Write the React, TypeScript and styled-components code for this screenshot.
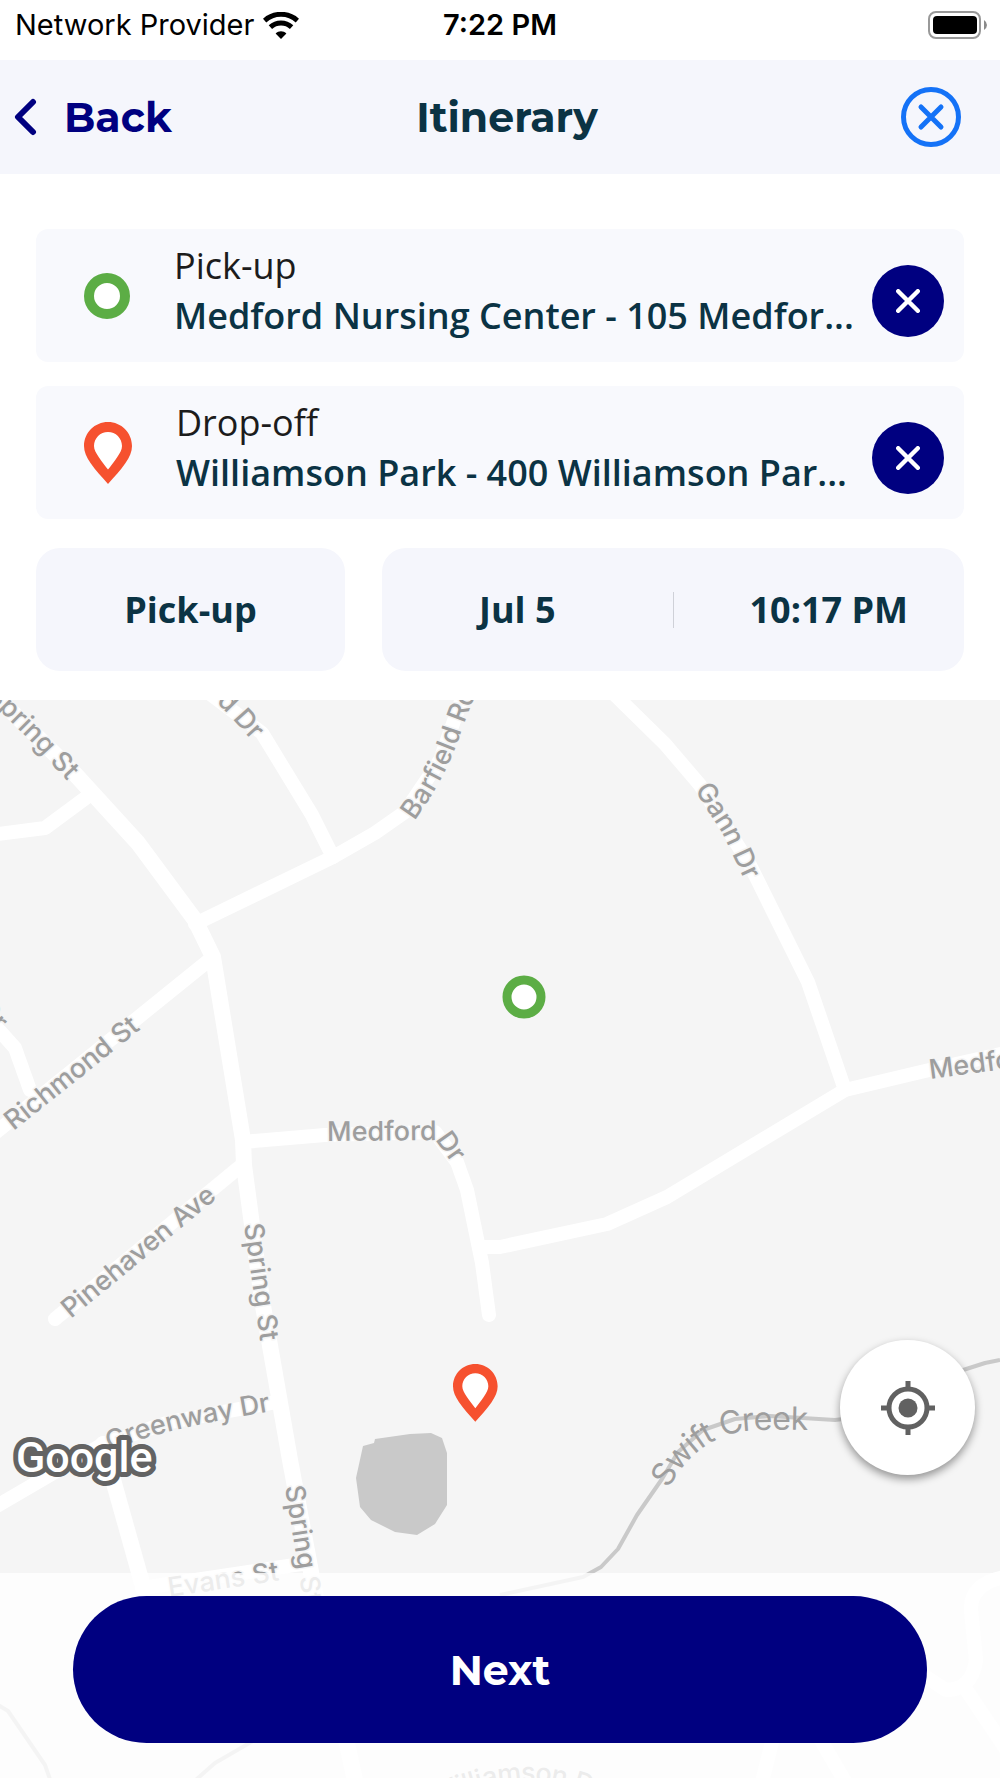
import React from "react";
import styled, { createGlobalStyle } from "styled-components";

const color = {
  navy: "#000080",
  ink: "#0b3344",
  text: "#1c1c1c",
  bar: "#f5f6fc",
  card: "#f8f9fd",
  link: "#1472f7",
  green: "#5cad45",
  red: "#f6512f",
  land: "#f5f5f5",
  water: "#c9c9c9",
  label: "#9e9e9e",
};

const GlobalStyle = createGlobalStyle`
  *, *::before, *::after { box-sizing: border-box; }
  html, body { margin: 0; background: #fff; }
  button { margin: 0; padding: 0; border: 0; background: none; font: inherit; color: inherit; cursor: pointer; }
  svg { display: block; }
`;

const Screen = styled.div`
  display: flex;
  flex-direction: column;
  min-height: 100vh;
  font-family: "Open Sans", "Noto Sans", sans-serif;
  font-size: 36px;
  line-height: 50px;
  color: ${color.text};
`;

const StatusBar = styled.div`
  display: grid;
  grid-template-columns: 1fr auto 1fr;
  align-items: center;
  height: 60px;
  padding: 0 12px 10px;
  font-family: Inter, sans-serif;
  font-size: 29px;
  line-height: 36px;
  color: #000;
`;

const Carrier = styled.div`
  display: flex;
  align-items: center;
  gap: 9px;
  padding-left: 3px;
`;

const Clock = styled.time`
  font-weight: 600;
`;

const BatterySlot = styled.div`
  justify-self: end;
`;

const Header = styled.header`
  display: grid;
  grid-template-columns: 1fr auto 1fr;
  align-items: center;
  height: 114px;
  padding-left: 14px;
  background: ${color.bar};
  font-family: Montserrat, Inter, sans-serif;
  font-size: 41px;
  line-height: 50px;
  font-weight: 700;
`;

const BackButton = styled.button`
  display: flex;
  align-items: center;
  justify-self: start;
  gap: 26px;
  color: ${color.navy};
`;

const Title = styled.h1`
  margin: 0;
  font-size: inherit;
  font-weight: inherit;
  color: ${color.ink};
`;

const CloseButton = styled.button`
  justify-self: end;
  margin-right: 39px;
  color: ${color.link};
`;

const Trip = styled.main`
  display: flex;
  flex-direction: column;
  gap: 24px;
  padding: 55px 36px 29px;
`;

const StopCard = styled.section`
  display: flex;
  align-items: center;
  height: 133px;
  padding: 0 20px 0 48px;
  border-radius: 12px;
  background: ${color.card};
`;

const StopText = styled.div`
  flex: 1;
  min-width: 0;
  height: 100%;
  padding-top: 12px;
  margin: 0 12px 0 44px;
  white-space: nowrap;
`;

const StopKind = styled.div``;

const StopAddress = styled.div`
  font-weight: 600;
  color: ${color.ink};
`;

const ClearButton = styled.button`
  display: grid;
  place-items: center;
  align-self: flex-end;
  width: 72px;
  height: 72px;
  margin-bottom: 25px;
  border-radius: 50%;
  background: ${color.navy};
  color: #fff;
`;

const Schedule = styled.div`
  display: grid;
  grid-template-columns: 309fr 582fr;
  gap: 37px;
  margin-top: 5px;
  font-weight: 700;
  color: ${color.ink};
`;

const ModeButton = styled.button`
  height: 123px;
  border-radius: 24px;
  background: ${color.bar};
`;

const DateTime = styled.div`
  display: flex;
  align-items: center;
  height: 123px;
  border-radius: 24px;
  background: ${color.bar};
`;

const DateTimeButton = styled.button`
  flex: 1 1 0;
  height: 100%;
`;

const Divider = styled.span`
  width: 1px;
  height: 36px;
  margin: 0 20px;
  background: #cfd1d8;
`;

const MapArea = styled.section`
  position: relative;
  display: flex;
  flex-direction: column;
  justify-content: flex-end;
  flex: 1;
  min-height: 900px;
  overflow: hidden;
  background: ${color.land};
`;

const MapCanvas = styled.svg`
  position: absolute;
  inset: 0;
  width: 100%;
  height: 100%;
`;

const Road = styled.path<{ $width?: number }>`
  fill: none;
  stroke: #fff;
  stroke-width: ${(p) => p.$width ?? 14};
  stroke-linejoin: round;
  stroke-linecap: round;
`;

const Creek = styled.path`
  fill: none;
  stroke: ${color.water};
  stroke-width: 4;
  stroke-linejoin: round;
`;

const StreetLabel = styled.text<{ $water?: boolean }>`
  font-family: Inter, Roboto, sans-serif;
  font-size: ${(p) => (p.$water ? 32 : 27)}px;
  font-weight: ${(p) => (p.$water ? 400 : 500)};
  fill: ${color.label};
  stroke: ${(p) => (p.$water ? "none" : color.land)};
  stroke-width: 3px;
  stroke-linejoin: round;
  paint-order: stroke;
`;

const MapBrand = styled.text`
  font-family: Roboto, sans-serif;
  font-size: 43px;
  font-weight: 500;
  fill: #fff;
  stroke: #636363;
  stroke-width: 10px;
  stroke-linejoin: round;
  paint-order: stroke;
`;

const LocateButton = styled.button`
  position: relative;
  display: grid;
  place-items: center;
  align-self: flex-end;
  width: 135px;
  height: 135px;
  margin: 0 25px 98px 0;
  border-radius: 50%;
  background: #fff;
  color: #616161;
  box-shadow: 0 4px 8px rgba(0, 0, 0, 0.4);
`;

const Footer = styled.footer`
  position: relative;
  display: flex;
  padding: 23px 73px 35px;
  background: rgba(255, 255, 255, 0.8);
`;

const NextButton = styled.button`
  flex: 1;
  height: 147px;
  border-radius: 74px;
  background: ${color.navy};
  color: #fff;
  font-family: Montserrat, Inter, sans-serif;
  font-size: 41px;
  font-weight: 700;
`;

const WifiIcon = () => (
  <svg width="36" height="27" viewBox="0 0 36 27" fill="none" stroke="#000" aria-hidden="true">
    <path d="M1.6 8.600C10.700 .2 25.300 .2 34.400 8.600" strokeWidth="5" />
    <path d="M7.400 15.200C13.400 9.700 22.600 9.700 28.600 15.200" strokeWidth="5" />
    <path d="M18 27L12.600 21.500C15.600 18.500 20.400 18.500 23.400 21.500Z" fill="#000" stroke="none" />
  </svg>
);

const BatteryIcon = () => (
  <svg width="60" height="28" viewBox="0 0 60 28" aria-label="Battery full" role="img">
    <rect x="1" y="1" width="51" height="26" rx="7" fill="none" stroke="#999" strokeWidth="2" />
    <rect x="5" y="5" width="44" height="18" rx="4" fill="#000" />
    <path d="M56 9q3 2 3 5t-3 5z" fill="#8a8a8a" />
  </svg>
);

const ChevronIcon = () => (
  <svg width="24" height="38" viewBox="0 0 24 38" fill="none" aria-hidden="true">
    <path d="M19 4L4 19L19 34" stroke="currentColor" strokeWidth="6" strokeLinecap="round" strokeLinejoin="round" />
  </svg>
);

const CloseIcon = () => (
  <svg width="60" height="60" viewBox="0 0 60 60" fill="none" stroke="currentColor" strokeWidth="5" aria-hidden="true">
    <circle cx="30" cy="30" r="27.500" />
    <path d="M20 20L40 40M40 20L20 40" strokeLinecap="round" />
  </svg>
);

const CrossIcon = () => (
  <svg width="24" height="24" viewBox="0 0 24 24" fill="none" aria-hidden="true">
    <path d="M2.200 2.200L21.800 21.800M21.800 2.200L2.200 21.800" stroke="currentColor" strokeWidth="4.400" strokeLinecap="round" />
  </svg>
);

const RingIcon = () => (
  <svg width="46" height="46" viewBox="0 0 46 46" aria-hidden="true">
    <circle cx="23" cy="23" r="18" fill="#fff" stroke={color.green} strokeWidth="10" />
  </svg>
);

const PinShape = () => (
  <>
    <path
      d="M24 0C10.700 0 0 10.700 0 24C0 30 2.500 35 6.500 41C11.500 48.500 18 55 24 62C30 55 36.500 48.500 41.500 41C45.500 35 48 30 48 24C48 10.700 37.300 0 24 0Z"
      fill={color.red}
    />
    <path
      d="M24 10C16.200 10 10 16.200 10 24C10 27.500 12 31 15 35.500C18 40 21 43.700 24 47.500C27 43.700 30 40 33 35.500C36 31 38 27.500 38 24C38 16.200 31.800 10 24 10Z"
      fill="#fff"
    />
  </>
);

const PinIcon = () => (
  <svg width="48" height="62" viewBox="0 0 48 62" aria-hidden="true">
    <PinShape />
  </svg>
);

const LocateIcon = () => (
  <svg width="54" height="54" viewBox="0 0 54 54" fill="none" stroke="currentColor" strokeWidth="5" aria-hidden="true">
    <circle cx="27" cy="27" r="19" />
    <circle cx="27" cy="27" r="9.500" fill="currentColor" stroke="none" />
    <path d="M27 0V7M27 47V54M0 27H7M47 27H54" />
  </svg>
);

type Street = { id: string; name: string; line: string; end?: boolean; water?: boolean };

const streets: Street[] = [
  { id: "spring-n", name: "Spring St", line: "M-45 653L3 701L40 738L74 775", end: true },
  { id: "dr-n", name: "d Dr", line: "M188 660L230 703L259 735", end: true },
  { id: "barfield", name: "Barfield Rd", line: "M407 816Q440 770 452 730L475 670" },
  { id: "gann", name: "Gann Dr", line: "M702 785L731 830L769 912" },
  { id: "medford-e", name: "Medford Dr", line: "M929 1070L1080 1050" },
  { id: "medford", name: "Medford Dr", line: "M327 1132L440 1131L484 1193" },
  { id: "richmond", name: "Richmond St", line: "M8 1124L159 1003" },
  { id: "pinehaven", name: "Pinehaven Ave", line: "M65 1312L240 1168" },
  { id: "spring-m", name: "Spring St", line: "M253 1223L272 1360" },
  { id: "greenway", name: "Greenway Dr", line: "M107 1443Q147 1422 290 1399" },
  { id: "spring-s", name: "Spring St", line: "M294 1485L316 1625" },
  { id: "evans", name: "Evans St", line: "M168 1588L300 1568" },
  { id: "dr-w", name: "Dr", line: "M-28 990L3 1026", end: true },
  { id: "williamson", name: "Williamson Dr", line: "M430 1794L478 1780Q520 1768 560 1776L640 1800" },
  { id: "creek", name: "Swift Creek", line: "M659 1483Q690 1427 745 1420Q780 1417 850 1421", water: true },
];

const roads = [
  "M91 794L45 828L-10 835",
  "M205 690L262 733L312 815L333 857",
  "M195 924L333 857L375 833L405 812L440 760L465 690",
  "M213 957L140 1016L-10 1137",
  "M-10 1020L15 1048L30 1090",
  "M243 1142L325 1135L435 1132L457 1162L467 1190L482 1263L489 1315",
  "M482 1247L500 1247L607 1224L667 1197L845 1090L925 1071L1010 1052",
  "M610 690L665 744L700 785L750 865L808 982L845 1090",
  "M242 1165L55 1319",
  "M276 1402L170 1422L103 1444L-10 1510",
  "M142 1588L308 1563",
  "M1010 1576Q970 1582 971 1610L976 1660Q972 1690 946 1690L900 1660",
  "M965 1688L1010 1755",
  "M775 1730L760 1790",
  "M815 1730L850 1790",
];

const StreetMap = () => (
  <MapCanvas viewBox="0 700 1000 1078" preserveAspectRatio="xMidYMin slice" role="img" aria-label="Trip map">
    <polygon
      fill={color.water}
      points="363,1446 374,1443 375,1439 410,1434 431,1433 442,1438 447,1453 447,1505 435,1524 417,1535 395,1532 371,1520 360,1507 356,1478"
    />
    <Creek d="M500 1595L583 1577L601 1567L618 1549L637 1515L662 1479L678 1452L703 1430L735 1419L770 1416L835 1420L900 1412L960 1371L985 1363L1000 1360" />
    <Creek d="M-5 1703L8 1711L45 1765L52 1785" />
    <Creek d="M190 1785L215 1763L260 1737" />
    {roads.map((d) => (
      <Road key={d} d={d} />
    ))}
    <Road $width={16} d="M103 1444L142 1583" />
    <Road $width={16} d="M-10 690L75 774L138 843L195 920L213 957L243 1140L244 1165L262 1300L290 1460L320 1620L356 1785" />
    {streets.map((s) => (
      <React.Fragment key={s.id}>
        <path id={s.id} d={s.line} fill="none" />
        <StreetLabel $water={s.water} textAnchor={s.end ? "end" : "start"} dy={s.water ? 11 : 9}>
          <textPath href={`#${s.id}`} startOffset={s.end ? "100%" : "0"}>
            {s.name}
          </textPath>
        </StreetLabel>
      </React.Fragment>
    ))}
    <MapBrand x="16" y="1472">Google</MapBrand>
    <circle cx="524" cy="997" r="17" fill="#fff" stroke={color.green} strokeWidth="9" />
    <g transform="translate(453 1364) scale(.93)">
      <PinShape />
    </g>
  </MapCanvas>
);

const stops = [
  { kind: "Pick-up", address: "Medford Nursing Center - 105 Medfor...", icon: <RingIcon /> },
  { kind: "Drop-off", address: "Williamson Park - 400 Williamson Par...", icon: <PinIcon /> },
];

export default function App() {
  return (
    <Screen>
      <GlobalStyle />
      <StatusBar>
        <Carrier>
          Network Provider
          <WifiIcon />
        </Carrier>
        <Clock>7:22 PM</Clock>
        <BatterySlot>
          <BatteryIcon />
        </BatterySlot>
      </StatusBar>
      <Header>
        <BackButton type="button">
          <ChevronIcon />
          Back
        </BackButton>
        <Title>Itinerary</Title>
        <CloseButton type="button" aria-label="Close">
          <CloseIcon />
        </CloseButton>
      </Header>
      <Trip>
        {stops.map((stop) => (
          <StopCard key={stop.kind}>
            {stop.icon}
            <StopText>
              <StopKind>{stop.kind}</StopKind>
              <StopAddress>{stop.address}</StopAddress>
            </StopText>
            <ClearButton type="button" aria-label={`Clear ${stop.kind}`}>
              <CrossIcon />
            </ClearButton>
          </StopCard>
        ))}
        <Schedule>
          <ModeButton type="button">Pick-up</ModeButton>
          <DateTime>
            <DateTimeButton type="button">Jul 5</DateTimeButton>
            <Divider />
            <DateTimeButton type="button">10:17 PM</DateTimeButton>
          </DateTime>
        </Schedule>
      </Trip>
      <MapArea>
        <StreetMap />
        <LocateButton type="button" aria-label="Show my location">
          <LocateIcon />
        </LocateButton>
        <Footer>
          <NextButton type="button">Next</NextButton>
        </Footer>
      </MapArea>
    </Screen>
  );
}
